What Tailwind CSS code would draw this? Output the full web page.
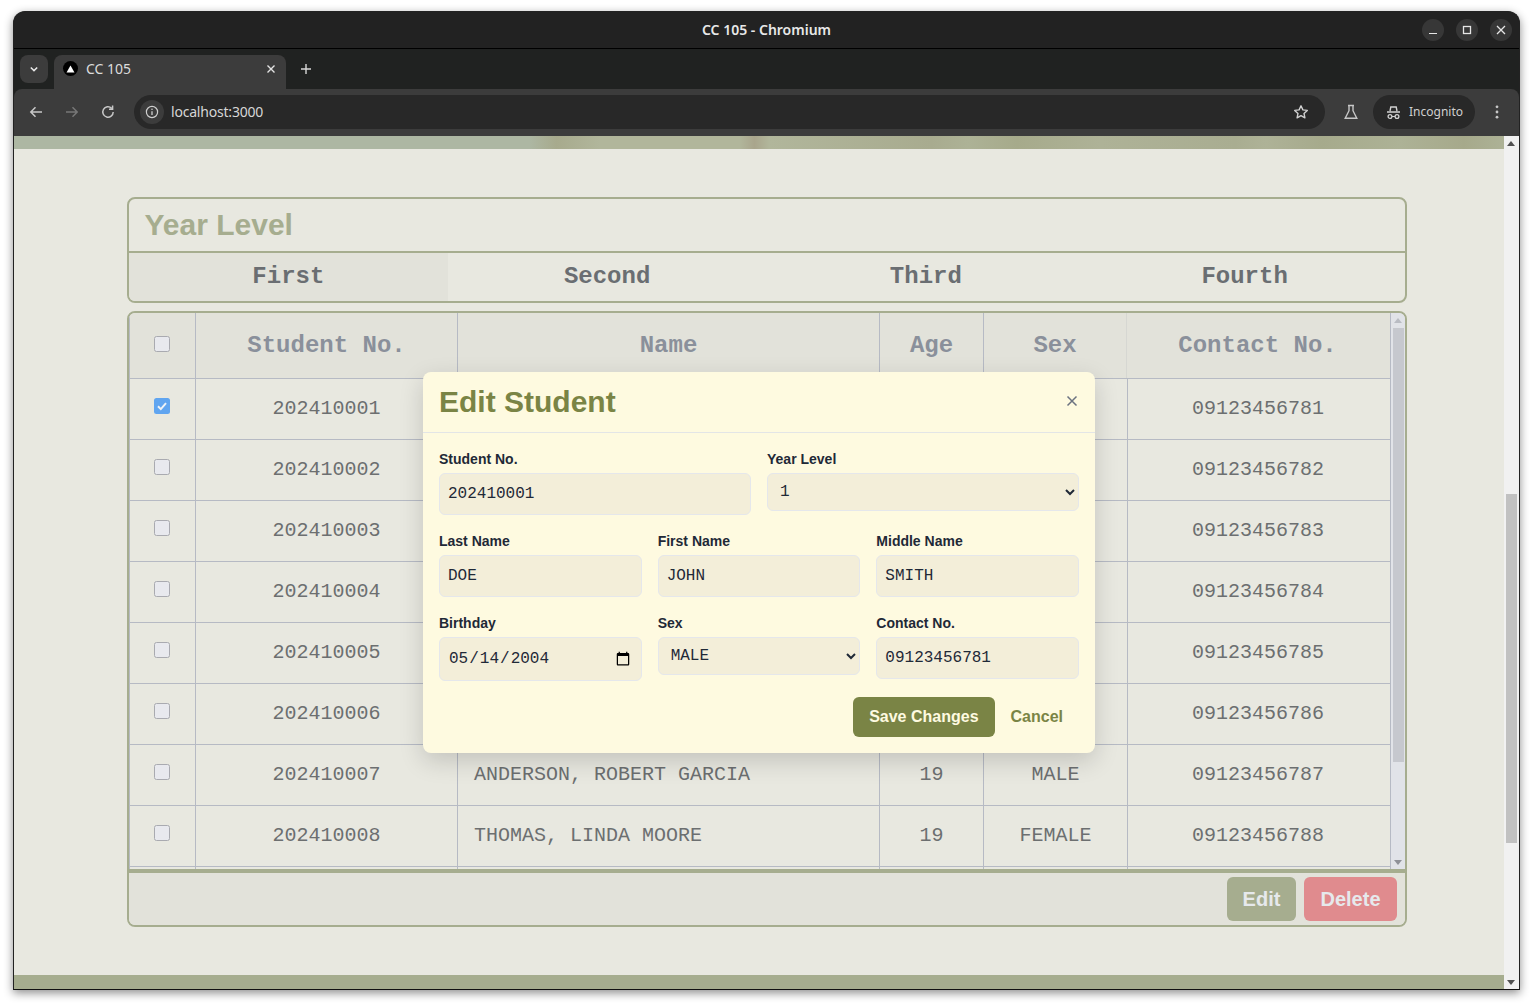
<!DOCTYPE html>
<html lang="en">

<head>
    <meta charset="UTF-8" />
    <meta name="viewport" content="width=device-width, initial-scale=1.0" />
    <title>CC 105</title>
    <script src="https://cdn.jsdelivr.net/npm/@tailwindcss/browser@4"></script>
</head>

<body class="bg-white h-[1006px] overflow-hidden font-['Liberation_Sans',sans-serif]">
    <!-- Browser window -->
    <div class="ml-[13px] mt-[11px] w-[1507px] h-[979px] flex flex-col bg-[#202221] border border-[#222] border-b-[#111] rounded-t-xl overflow-hidden shadow-[0_3px_10px_rgba(0,0,0,0.45)]">

        <!-- Title bar -->
        <div class="h-[37px] shrink-0 bg-[#222222] border-b border-black relative flex items-center justify-center pb-[2px]">
            <span class="text-[14px] font-semibold text-[#e8e8e8] font-['Noto_Sans',sans-serif]">CC 105 - Chromium</span>
            <div class="absolute right-[7px] top-[7px] flex gap-3">
                <div class="w-[22px] h-[22px] rounded-full bg-[#373737] flex items-center justify-center">
                    <svg width="10" height="10" viewBox="0 0 10 10"><path d="M1 8.5h8" stroke="#e6e6e6" stroke-width="1.2" /></svg>
                </div>
                <div class="w-[22px] h-[22px] rounded-full bg-[#373737] flex items-center justify-center">
                    <svg width="10" height="10" viewBox="0 0 10 10"><rect x="1.5" y="1.5" width="7" height="7" fill="none" stroke="#e6e6e6" stroke-width="1.3" /></svg>
                </div>
                <div class="w-[22px] h-[22px] rounded-full bg-[#373737] flex items-center justify-center">
                    <svg width="10" height="10" viewBox="0 0 10 10"><path d="M1 1l8 8M9 1l-8 8" stroke="#e6e6e6" stroke-width="1.3" /></svg>
                </div>
            </div>
        </div>

        <!-- Tab strip -->
        <div class="h-[40px] shrink-0 bg-[#202221] flex items-end pl-[6px] relative">
            <div class="w-[28px] h-[28px] mb-[6px] rounded-lg bg-[#3c3c3c] flex items-center justify-center">
                <svg width="10" height="10" viewBox="0 0 10 10"><path d="M1.8 3.5L5 6.6l3.2-3.1" fill="none" stroke="#e6e6e6" stroke-width="1.5" /></svg>
            </div>
            <div class="w-[232px] h-[34px] ml-[6px] rounded-t-lg bg-[#3c3c3c] flex items-center pl-[9px] pr-[10px] pb-[7px]">
                <div class="w-[15px] h-[15px] rounded-full bg-black flex items-center justify-center">
                    <svg width="9" height="8" viewBox="0 0 9 8"><path d="M4.5 0.5L8.5 7.5H0.5z" fill="#fff" /></svg>
                </div>
                <span class="ml-[8px] text-[14px] text-[#dcdcdc] font-['Noto_Sans',sans-serif]">CC 105</span>
                <svg class="ml-auto" width="10" height="10" viewBox="0 0 10 10"><path d="M1.5 1.5l7 7M8.5 1.5l-7 7" stroke="#e3e3e3" stroke-width="1.4" /></svg>
            </div>
            <svg class="ml-[14px] mb-[14px]" width="12" height="12" viewBox="0 0 12 12"><path d="M6 1v10M1 6h10" stroke="#d8d8d8" stroke-width="1.4" /></svg>
        </div>

        <!-- Toolbar -->
        <div class="h-[47px] shrink-0 bg-[#3c3c3c] flex items-center pl-[14px] pr-[14px] pb-[1px] rounded-t-lg">
            <svg width="16" height="16" viewBox="0 0 16 16" class="mr-[20px]"><path d="M14 8H3M7.5 3.2L2.8 8l4.7 4.8" fill="none" stroke="#c7c7c7" stroke-width="1.5" /></svg>
            <svg width="16" height="16" viewBox="0 0 16 16" class="mr-[20px]"><path d="M2 8h11M8.5 3.2L13.2 8l-4.7 4.8" fill="none" stroke="#777" stroke-width="1.5" /></svg>
            <svg width="16" height="16" viewBox="0 0 16 16" class="mr-[18px]"><path d="M13.2 8a5.2 5.2 0 1 1-1.6-3.8M12.6 1.6v3.6H9" fill="none" stroke="#c7c7c7" stroke-width="1.5" /></svg>
            <div class="w-[1191px] h-[34px] rounded-full bg-[#282828] flex items-center pl-[6px] pr-[16px]">
                <div class="w-[24px] h-[24px] rounded-full bg-[#3c3c3c] flex items-center justify-center">
                    <svg width="14" height="14" viewBox="0 0 14 14"><circle cx="7" cy="7" r="5.6" fill="none" stroke="#cfcfcf" stroke-width="1.2" /><path d="M7 6.2v3.8" stroke="#cfcfcf" stroke-width="1.3" /><circle cx="7" cy="4.2" r="0.8" fill="#cfcfcf" /></svg>
                </div>
                <span class="ml-[7px] mb-[2px] text-[14px] text-[#d6d6d6] font-['Noto_Sans',sans-serif] tracking-[-0.2px]">localhost:3000</span>
                <svg class="ml-auto" width="16" height="16" viewBox="0 0 16 16"><path d="M8 1.8l1.9 4.1 4.4.5-3.3 3 .9 4.4L8 11.6l-3.9 2.2.9-4.4-3.3-3 4.4-.5z" fill="none" stroke="#d0d0d0" stroke-width="1.4" stroke-linejoin="round" /></svg>
            </div>
            <svg class="ml-[18px]" width="16" height="16" viewBox="0 0 16 16"><path d="M5 1.5h6M6 1.5v5.2L2.2 14.2h11.6L10 6.7V1.5" fill="none" stroke="#c7c7c7" stroke-width="1.4" /></svg>
            <div class="ml-[14px] w-[102px] h-[34px] rounded-full bg-[#282828] flex items-center pl-[13px]">
                <svg width="15" height="15" viewBox="0 0 15 15"><path d="M4 6l.8-4h5.4l.8 4M1 7h13" fill="none" stroke="#d0d0d0" stroke-width="1.4" /><circle cx="4" cy="11.5" r="1.9" fill="none" stroke="#d0d0d0" stroke-width="1.3" /><circle cx="11" cy="11.5" r="1.9" fill="none" stroke="#d0d0d0" stroke-width="1.3" /><path d="M6 11.5h3" stroke="#d0d0d0" stroke-width="1.2" /></svg>
                <span class="ml-[8px] text-[12px] text-[#cfcfcf] font-['Noto_Sans',sans-serif]">Incognito</span>
            </div>
            <svg class="ml-[14px]" width="16" height="16" viewBox="0 0 16 16"><circle cx="8" cy="2.8" r="1.4" fill="#c7c7c7" /><circle cx="8" cy="8" r="1.4" fill="#c7c7c7" /><circle cx="8" cy="13.2" r="1.4" fill="#c7c7c7" /></svg>
        </div>

        <!-- Viewport -->
        <div class="flex-1 flex min-h-0">
            <!-- Page -->
            <div class="w-[1490px] relative flex flex-col bg-[#e8e8e0]">
                <div class="h-[13px] shrink-0 bg-[linear-gradient(90deg,#adb7a3_0%,#adb7a3_34.6%,#a7aa8d_36.4%,#b1b69b_39.3%,#b1b69b_48.7%,#a9a58c_49.7%,#b1b69b_50.7%,#a8ab8f_61.6%,#adb296_64%,#a6aa8b_67.3%,#aeb297_72.9%,#a9ad91_82%,#aeb297_84%,#a6aa8c_87.8%,#adb296_93%,#a6a98b_97.3%,#adb296_100%)]"></div>

                <main class="flex-1 ml-[113px] w-[1280px] pt-[48px]">
                    <!-- Year filter -->
                    <section class="h-[106px] border-2 border-[#a6ad8f] rounded-lg overflow-hidden">
                        <h2 class="h-[54px] border-b-2 border-[#a6ad8f] pl-[15.5px] pb-[2px] flex items-center text-[30px] font-bold text-[#a6ad8f]">Year Level</h2>
                        <div class="grid grid-cols-4 h-[48px] pr-[1px] font-['Liberation_Mono',monospace] text-2xl font-bold text-[#6a6e72]">
                            <button class="bg-[#e2e2da]">First</button>
                            <button>Second</button>
                            <button>Third</button>
                            <button>Fourth</button>
                        </div>
                    </section>

                    <!-- Students -->
                    <section class="mt-2 h-[616px] border-2 border-[#a6ad8f] rounded-lg overflow-hidden flex flex-col">
                        <div class="h-[556px] flex shrink-0">
                            <div class="w-[1261px] overflow-hidden font-['Liberation_Mono',monospace]">
                                <div class="h-[66px] bg-[#e2e2da] border-b border-[#b6bac4] border-l border-l-[#b6bac4] grid grid-cols-[66px_262px_422px_104px_143px_263px] items-stretch text-2xl font-bold text-[#8a909b]">
                                    <div class="border-r border-[#b6bac4] flex items-center justify-center pb-[3px] pr-[2px]"><span class="w-4 h-4 rounded-[2.5px] border border-[#a9aab0] bg-[#e8e9ee]"></span></div>
                                    <div class="border-r border-[#b6bac4] flex items-center justify-center">Student No.</div>
                                    <div class="border-r border-[#b6bac4] flex items-center justify-center">Name</div>
                                    <div class="border-r border-[#b6bac4] flex items-center justify-center">Age</div>
                                    <div class="border-r border-[#d6d7d2] flex items-center justify-center">Sex</div>
                                    <div class="flex items-center justify-center pr-[2px]">Contact No.</div>
                                </div>
                                <div id="rows"></div>
                            </div>
                            <!-- Table scrollbar -->
                            <div class="w-[15px] bg-[#e1e3e8] border-l border-[#b6bac4] relative">
                                <svg class="absolute left-[3px] top-[5px]" width="8" height="5" viewBox="0 0 8 5"><path d="M4 0l4 5H0z" fill="#b9bcc3" /></svg>
                                <div class="absolute left-[2px] top-[15px] w-[11px] h-[434px] bg-[#c6c8ce]"></div>
                                <svg class="absolute left-[3px] bottom-[4px]" width="8" height="5" viewBox="0 0 8 5"><path d="M0 0h8L4 5z" fill="#8f9198" /></svg>
                            </div>
                        </div>
                        <div class="flex-1 border-t-4 border-[#a6ad8f] bg-[#e2e2da] flex items-center justify-end gap-2 pr-2 text-[20px] font-bold text-[#e6e9ec]">
                            <button class="h-11 w-[69px] rounded-md bg-[#a6ad8f]">Edit</button>
                            <button class="h-11 w-[93px] rounded-md bg-[#e08b8e]">Delete</button>
                        </div>
                    </section>
                </main>

                <div class="h-[14px] shrink-0 bg-[#a6ad8f]"></div>

                <!-- Edit modal -->
                <div class="absolute left-[409px] top-[236px] w-[672px] h-[381px] bg-[#fefae0] rounded-lg shadow-[0_8px_24px_rgba(0,0,0,0.16)]">
                    <div class="h-[61px] border-b border-[#e3e5e6] flex items-center justify-between pl-4 pr-[17px] pb-[2px]">
                        <h3 class="text-[30px] font-bold text-[#7a8445]">Edit Student</h3>
                        <svg width="12" height="12" viewBox="0 0 12 12"><path d="M1.5 1.5l9 9M10.5 1.5l-9 9" stroke="#6b7280" stroke-width="1.5" /></svg>
                    </div>
                    <form class="px-4 pt-4">
                        <div class="grid grid-cols-2 gap-x-4 h-[82px]">
                            <label class="block text-sm font-bold text-[#1f2937]">Student No.
                                <input type="text" value="202410001" class="mt-1 w-full h-[42px] px-2 bg-[#f3eed9] border border-[#e5e7eb] rounded-md font-normal text-base text-[#1f2937] font-['Liberation_Mono',monospace]" />
                            </label>
                            <label class="block text-sm font-bold text-[#1f2937]">Year Level
                                <select class="mt-1 w-full h-[38px] px-2 bg-[#f3eed9] border border-[#e5e7eb] rounded-md font-normal text-base text-[#1f2937] font-['Liberation_Mono',monospace]">
                                    <option>1</option><option>2</option><option>3</option><option>4</option>
                                </select>
                            </label>
                        </div>
                        <div class="grid grid-cols-3 gap-x-4 h-[82px]">
                            <label class="block text-sm font-bold text-[#1f2937]">Last Name
                                <input type="text" value="DOE" class="mt-1 w-full h-[42px] px-2 bg-[#f3eed9] border border-[#e5e7eb] rounded-md font-normal text-base text-[#1f2937] font-['Liberation_Mono',monospace]" />
                            </label>
                            <label class="block text-sm font-bold text-[#1f2937]">First Name
                                <input type="text" value="JOHN" class="mt-1 w-full h-[42px] px-2 bg-[#f3eed9] border border-[#e5e7eb] rounded-md font-normal text-base text-[#1f2937] font-['Liberation_Mono',monospace]" />
                            </label>
                            <label class="block text-sm font-bold text-[#1f2937]">Middle Name
                                <input type="text" value="SMITH" class="mt-1 w-full h-[42px] px-2 bg-[#f3eed9] border border-[#e5e7eb] rounded-md font-normal text-base text-[#1f2937] font-['Liberation_Mono',monospace]" />
                            </label>
                        </div>
                        <div class="grid grid-cols-3 gap-x-4 h-[82px] mb-[2px]">
                            <label class="block text-sm font-bold text-[#1f2937]">Birthday
                                <input type="date" value="2004-05-14" class="mt-1 w-full h-[44px] px-2 bg-[#f3eed9] border border-[#e5e7eb] rounded-md font-normal text-base text-[#1f2937] font-['Liberation_Mono',monospace]" />
                            </label>
                            <label class="block text-sm font-bold text-[#1f2937]">Sex
                                <select class="mt-1 w-full h-[38px] px-2 bg-[#f3eed9] border border-[#e5e7eb] rounded-md font-normal text-base text-[#1f2937] font-['Liberation_Mono',monospace]">
                                    <option>MALE</option><option>FEMALE</option>
                                </select>
                            </label>
                            <label class="block text-sm font-bold text-[#1f2937]">Contact No.
                                <input type="text" value="09123456781" class="mt-1 w-full h-[42px] px-2 bg-[#f3eed9] border border-[#e5e7eb] rounded-md font-normal text-base text-[#1f2937] font-['Liberation_Mono',monospace]" />
                            </label>
                        </div>
                        <div class="flex justify-end items-center font-bold text-base">
                            <button type="button" class="h-10 px-4 rounded-md bg-[#7a8445] text-[#fefae0]">Save Changes</button>
                            <button type="button" class="h-10 px-4 text-[#7a8445]">Cancel</button>
                        </div>
                    </form>
                </div>
            </div>

            <!-- Page scrollbar -->
            <div class="w-[15px] bg-[#f1f1f1] relative">
                <svg class="absolute left-[3px] top-[5px]" width="8" height="5" viewBox="0 0 8 5"><path d="M4 0l4 5H0z" fill="#505050" /></svg>
                <div class="absolute left-[2px] top-[358px] w-[11px] h-[349px] bg-[#c1c1c1]"></div>
                <svg class="absolute left-[3px] bottom-[4px]" width="8" height="5" viewBox="0 0 8 5"><path d="M0 0h8L4 5z" fill="#505050" /></svg>
            </div>
        </div>
    </div>

    <script>
        // name, age and sex of the first rows sit behind the modal, so they stay empty
        const students = [
            ["202410001", "", "", "", "09123456781"],
            ["202410002", "", "", "", "09123456782"],
            ["202410003", "", "", "", "09123456783"],
            ["202410004", "", "", "", "09123456784"],
            ["202410005", "", "", "", "09123456785"],
            ["202410006", "", "", "", "09123456786"],
            ["202410007", "ANDERSON, ROBERT GARCIA", 19, "MALE", "09123456787"],
            ["202410008", "THOMAS, LINDA MOORE", 19, "FEMALE", "09123456788"],
            ["", "", "", "", ""]
        ];

        document.getElementById("rows").innerHTML = students.map((s, i) => `
            <div class="h-[61px] border-b border-l border-[#b6bac4] grid grid-cols-[66px_262px_422px_104px_144px_262px] items-stretch text-[20px] text-[#6c6f70]">
                <div class="border-r border-[#b6bac4] flex items-center justify-center pb-[6px] pr-[2px]">
                    ${i === 0
                        ? `<span class="w-4 h-4 rounded-[2.5px] bg-[#60a5f0] flex items-center justify-center"><svg width="12" height="12" viewBox="0 0 12 12"><path d="M2 6.3l2.8 2.8L10 3.2" fill="none" stroke="#eef2f6" stroke-width="2" /></svg></span>`
                        : `<span class="w-4 h-4 rounded-[2.5px] border border-[#a9aab0] bg-[#e8e9ee]"></span>`}
                </div>
                <div class="border-r border-[#b6bac4] flex items-center justify-center">${s[0]}</div>
                <div class="border-r border-[#b6bac4] flex items-center pl-4">${s[1]}</div>
                <div class="border-r border-[#b6bac4] flex items-center justify-center">${s[2]}</div>
                <div class="border-r border-[#b6bac4] flex items-center justify-center">${s[3]}</div>
                <div class="flex items-center justify-center pr-[2px]">${s[4]}</div>
            </div>
        `).join("");
    </script>
</body>

</html>
